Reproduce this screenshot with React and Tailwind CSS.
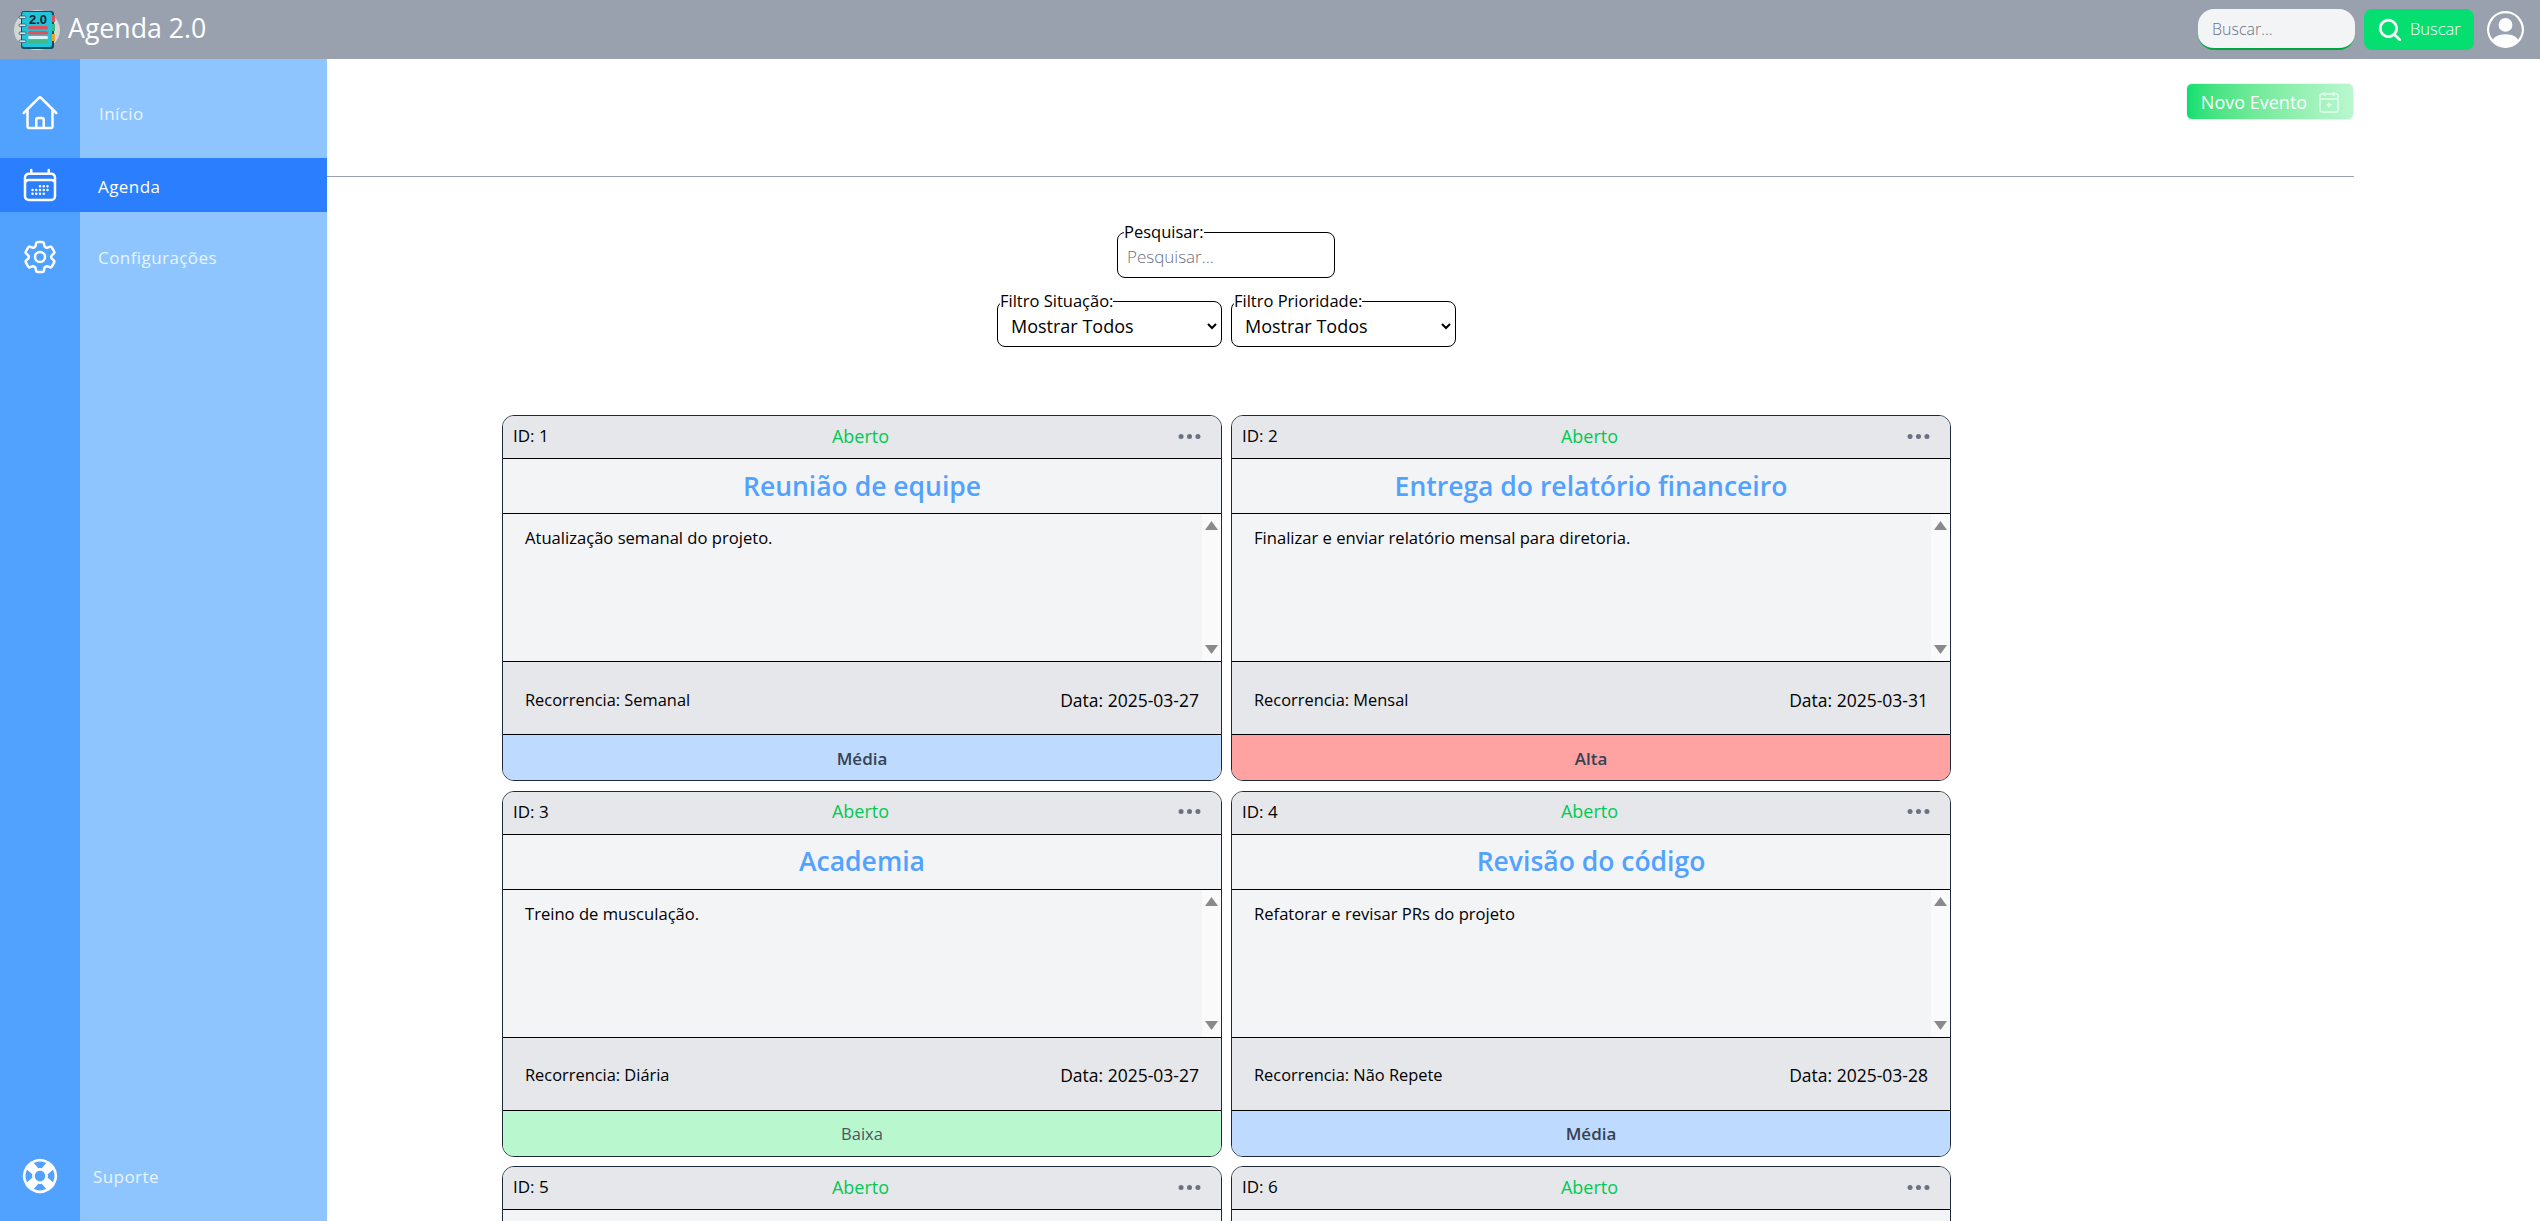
import React from 'react';
import { HiOutlineHome, HiOutlineCalendarDays, HiOutlineCog6Tooth, HiLifebuoy, HiMagnifyingGlass } from 'react-icons/hi2';
import { BsPersonCircle, BsThreeDots } from 'react-icons/bs';

const events = [
  { id: 1, title: 'Reunião de equipe', text: 'Atualização semanal do projeto.', rec: 'Semanal', date: '2025-03-27', prio: 'Média' },
  { id: 2, title: 'Entrega do relatório financeiro', text: 'Finalizar e enviar relatório mensal para diretoria.', rec: 'Mensal', date: '2025-03-31', prio: 'Alta' },
  { id: 3, title: 'Academia', text: 'Treino de musculação.', rec: 'Diária', date: '2025-03-27', prio: 'Baixa' },
  { id: 4, title: 'Revisão do código', text: 'Refatorar e revisar PRs do projeto', rec: 'Não Repete', date: '2025-03-28', prio: 'Média' },
  { id: 5, title: 'Consulta médica', text: 'Check-up anual.', rec: 'Anual', date: '2025-04-02', prio: 'Média' },
  { id: 6, title: 'Planejamento', text: 'Definir metas do trimestre.', rec: 'Mensal', date: '2025-04-03', prio: 'Alta' },
];

const prioClass = {
  Média: 'bg-blue-200 text-gray-700 font-semibold text-[17px]',
  Alta: 'bg-red-300 text-gray-700 font-semibold text-[17px]',
  Baixa: 'bg-green-200 text-gray-600 text-[16.5px]',
};

const Logo = () => (
  <svg width="46" height="40" viewBox="0 0 46 40" className="shrink-0">
    <ellipse cx="23" cy="20" rx="23" ry="20" fill="#d3d6d2" />
    <rect x="7" y="1" width="33" height="38" rx="3" fill="#0f4f5f" />
    <rect x="8" y="2" width="30" height="35" rx="2" fill="#22c4dc" />
    <rect x="38" y="5" width="3" height="7" fill="#e0525a" />
    <rect x="38" y="14" width="3" height="7" fill="#3cba8c" />
    <rect x="38" y="24" width="3" height="7" fill="#e3a53c" />
    <text x="24" y="14" textAnchor="middle" fontSize="13" fontWeight="700" fontFamily="'Liberation Sans', sans-serif" fill="#123">2.0</text>
    <rect x="14" y="16" width="20" height="3.5" rx="1.5" fill="#e0525a" />
    <rect x="14" y="21" width="20" height="3.5" rx="1.5" fill="#e0525a" />
    <rect x="14" y="26" width="20" height="3" rx="1.5" fill="#d8f4f6" />
    <rect x="14" y="30" width="20" height="3.5" rx="1.5" fill="#3cba8c" />
    <g fill="#d8e4e8" stroke="#0f4f5f" strokeWidth="0.7">
      <rect x="5" y="6" width="7" height="2.5" rx="1.2" />
      <rect x="5" y="14" width="7" height="2.5" rx="1.2" />
      <rect x="5" y="22" width="7" height="2.5" rx="1.2" />
      <rect x="5" y="30" width="7" height="2.5" rx="1.2" />
    </g>
  </svg>
);

const CalendarPlus = () => (
  <svg width="20" height="22" viewBox="0 0 20 22" fill="none" stroke="currentColor" strokeWidth="1.5" className="opacity-70">
    <rect x="1" y="3" width="18" height="18" rx="2" />
    <path d="M1 8h18M5.5 1v4M14.5 1v4M10 11.5v5M7.5 14h5" />
  </svg>
);

const Arrow = ({ down }) => (
  <svg width="13" height="9" viewBox="0 0 13 9" className={down ? 'rotate-180' : ''}>
    <path d="M6.5 0 13 9H0z" fill="#8a8a8a" />
  </svg>
);

const NavRow = ({ icon, label, active, className, iconClass, labelClass }) => (
  <div className={`flex ${active ? 'bg-blue-500 items-center' : ''} ${className}`}>
    <div className={`w-20 h-full shrink-0 flex justify-center text-white ${active ? 'items-center' : 'bg-blue-400'} ${iconClass}`}>{icon}</div>
    <div className={`text-[17px] tracking-wide ${active ? 'text-white' : 'text-white/80'} ${labelClass}`}>{label}</div>
  </div>
);

const EventCard = ({ ev }) => (
  <div className="border border-gray-800 rounded-xl overflow-hidden h-[366px] flex flex-col text-[17px] text-black">
    <div className="h-[43px] shrink-0 bg-gray-200 border-b border-black relative flex items-center justify-between pl-[10px] pr-[18px] pb-[2px]">
      <span className="font-medium">ID: {ev.id}</span>
      <span className="absolute left-0 right-[3px] text-center text-[18px] font-medium text-green-500">Aberto</span>
      <BsThreeDots className="text-gray-500" size={27} />
    </div>
    <div className="h-[55px] shrink-0 bg-gray-100 border-b border-black flex items-center justify-center pt-[1px]">
      <span className="text-[26.5px] font-semibold text-blue-400">{ev.title}</span>
    </div>
    <div className="h-[148px] shrink-0 bg-gray-100 border-b border-black flex">
      <p className="flex-1 pl-[22px] pt-[10px] text-[16.6px] leading-[27px]">{ev.text}</p>
      <div className="w-[19px] bg-[#fafafa] flex flex-col items-center justify-between py-[7px]">
        <Arrow />
        <Arrow down />
      </div>
    </div>
    <div className="h-[73px] shrink-0 bg-gray-200 border-b border-black flex items-center justify-between px-[22px] pt-[4px]">
      <span className="text-[16.4px]">Recorrencia: {ev.rec}</span>
      <span className="text-[17.5px]">Data: {ev.date}</span>
    </div>
    <div className={`flex-1 flex items-center justify-center pt-[2px] ${prioClass[ev.prio]}`}>{ev.prio}</div>
  </div>
);

const App = () => (
  <div className="h-screen overflow-hidden flex flex-col bg-white font-['Open_Sans','Noto_Sans',sans-serif]">
    <header className="h-[59px] shrink-0 bg-gray-400 flex items-center pl-[14px] pr-[16px]">
      <Logo />
      <span className="ml-[8px] text-[26.7px] text-white pb-[2px]">Agenda 2.0</span>
      <div className="ml-auto flex items-center">
        <input
          placeholder="Buscar..."
          className="w-[157px] h-[41px] rounded-2xl bg-gray-100 border-b-2 border-green-600 pl-[14px] text-[16px] font-light outline-none placeholder:text-gray-500"
        />
        <button className="ml-[9px] w-[110px] h-[41px] rounded-lg bg-green-400 flex items-center pl-[13px] text-white text-[16.5px] font-light">
          <HiMagnifyingGlass size={26} className="stroke-[1]" />
          <span className="ml-[7px]">Buscar</span>
        </button>
        <BsPersonCircle size={37} className="ml-[13px] text-white" />
      </div>
    </header>

    <div className="flex-1 flex min-h-0">
      <aside className="w-[327px] shrink-0 bg-blue-300 flex flex-col">
        <NavRow icon={<HiOutlineHome size={40} />} label="Início" className="h-[99px]" iconClass="pt-[34px]" labelClass="pl-[19px] pt-[42px]" />
        <NavRow icon={<HiOutlineCalendarDays size={40} />} label="Agenda" active className="h-[54px]" labelClass="pl-[18px] pt-[3px]" />
        <NavRow icon={<HiOutlineCog6Tooth size={40} />} label="Configurações" className="h-[90px]" iconClass="pt-[25px]" labelClass="pl-[18px] pt-[33px]" />
        <div className="flex-1 w-20 bg-blue-400" />
        <NavRow icon={<HiLifebuoy size={42} />} label="Suporte" className="h-[98px]" iconClass="pt-[32px]" labelClass="pl-[13px] pt-[41px]" />
      </aside>

      <main className="w-[2027px] shrink-0">
        <div className="h-[118px] border-b border-gray-400 flex justify-end pt-[24px]">
          <button className="w-[168px] h-[37px] rounded-md border border-gray-100 bg-gradient-to-r from-green-400 to-green-200 flex items-center justify-center gap-[12px] pt-[1px] text-white text-[18px] font-medium">
            Novo Evento
            <CalendarPlus />
          </button>
        </div>

        <div className="w-[1449px] ml-[175px] flex flex-col items-center">
          <fieldset className="mt-[44px] -ml-[1px] w-[218px] h-[57px] border border-black rounded-lg px-[9px]">
            <legend className="ml-[-3px] text-[16.5px] leading-[22px]">Pesquisar:</legend>
            <input placeholder="Pesquisar..." className="w-full h-[26px] text-[17px] font-light outline-none placeholder:text-gray-500" />
          </fieldset>
          <div className="mt-[12px] flex gap-[9px]">
            {['Filtro Situação:', 'Filtro Prioridade:'].map((label) => (
              <fieldset key={label} className="w-[225px] h-[57px] border border-black rounded-lg pl-[9px] pr-[1px]">
                <legend className="ml-[-7px] text-[16.5px] leading-[22px]">{label}</legend>
                <select className="w-full h-[28px] text-[18px] outline-none">
                  <option>Mostrar Todos</option>
                </select>
              </fieldset>
            ))}
          </div>

          <div className="mt-[68px] w-full grid grid-cols-2 gap-x-[9px] gap-y-[9.6px]">
            {events.map((ev) => (
              <EventCard key={ev.id} ev={ev} />
            ))}
          </div>
        </div>
      </main>
    </div>
  </div>
);

export default App;
